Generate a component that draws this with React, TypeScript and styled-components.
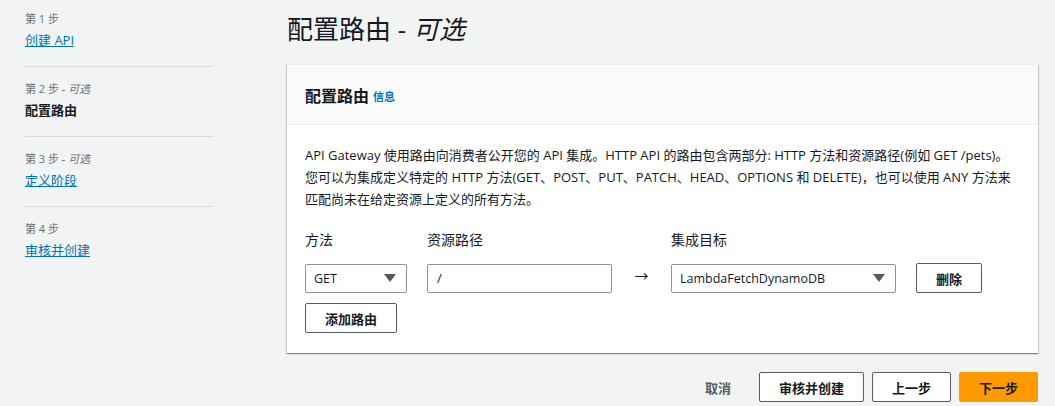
import styled, { createGlobalStyle } from 'styled-components'

const GlobalStyle = createGlobalStyle`
  body {
    margin: 0;
    background: #f2f3f3;
    font-family: 'Open Sans', 'Noto Sans CJK SC', sans-serif;
    color: #16191f;
  }
`

const Page = styled.div`
  display: flex;
  width: 1055px;
  height: 406px;
  overflow: hidden;
`

const Nav = styled.nav`
  width: 188px;
  margin-left: 25px;
  padding-top: 11px;
  flex-shrink: 0;
`

const StepItem = styled.div<{ $last?: boolean }>`
  padding-bottom: 16px;
  margin-bottom: 14px;
  border-bottom: ${(p) => (p.$last ? 'none' : '1px solid #d5dbdb')};
`

const StepLabel = styled.div`
  font-size: 11px;
  line-height: 16px;
  color: #687078;
  margin-bottom: 3px;

  em {
    font-style: italic;
  }
`

const StepLink = styled.a`
  display: block;
  width: fit-content;
  font-size: 13px;
  line-height: 20px;
  color: #0073bb;
  text-decoration: underline;
`

const StepCurrent = styled.div`
  font-size: 13px;
  line-height: 20px;
  font-weight: 700;
  color: #16191f;
`

const Main = styled.main`
  margin-left: 74px;
  width: 751px;
  padding-top: 10px;
  display: flex;
  flex-direction: column;
`

const Title = styled.h1`
  margin: 0 0 16px;
  font-size: 26px;
  line-height: 38px;
  font-weight: 400;

  em {
    font-style: italic;
  }
`

const Card = styled.section`
  background: #fff;
  border-top: 1px solid #eaeded;
  box-shadow: 0 1px 1px 0 rgba(0, 28, 36, 0.3), 1px 1px 1px 0 rgba(0, 28, 36, 0.15),
    -1px 1px 1px 0 rgba(0, 28, 36, 0.15);
`

const CardHeader = styled.header`
  background: #fafafa;
  border-bottom: 1px solid #eaeded;
  padding: 0 18px;
  height: 59px;
  display: flex;
  align-items: center;
  gap: 4px;
`

const CardTitle = styled.h2`
  margin: 0;
  font-size: 16px;
  font-weight: 700;
`

const InfoLink = styled.a`
  font-size: 11px;
  font-weight: 700;
  color: #0073bb;
  margin-top: 3px;
`

const CardBody = styled.div`
  padding: 19px 18px 20px;
`

const Description = styled.p`
  margin: 0 0 20px;
  font-size: 13px;
  line-height: 22px;
`

const RouteGrid = styled.div`
  display: grid;
  grid-template-columns: 102px 185px 19px 225px 66px;
  column-gap: 20px;
  row-gap: 10px;
  align-items: center;
`

const FieldLabel = styled.div`
  font-size: 14px;
  line-height: 20px;
  margin-bottom: 3px;
`

const SelectBox = styled.div`
  height: 29px;
  box-sizing: border-box;
  border: 1px solid #879596;
  border-radius: 2px;
  padding: 0 10px 0 8px;
  display: flex;
  align-items: center;
  justify-content: space-between;
  font-size: 12.5px;
  color: #16191f;
`

const Caret = styled.span`
  width: 0;
  height: 0;
  border-left: 6px solid transparent;
  border-right: 6px solid transparent;
  border-top: 8px solid #545b64;
`

const TextInput = styled.div`
  height: 29px;
  box-sizing: border-box;
  border: 1px solid #879596;
  border-radius: 2px;
  padding: 0 9px;
  display: flex;
  align-items: center;
  font-size: 13px;
`

const Arrow = styled.div`
  font-size: 14px;
  text-align: center;
  margin-top: -6px;
`

const Button = styled.button<{ $primary?: boolean }>`
  height: 30px;
  box-sizing: border-box;
  padding: 0 19px;
  border-radius: 2px;
  border: 1px solid ${(p) => (p.$primary ? '#ff9900' : '#545b64')};
  background: ${(p) => (p.$primary ? '#ff9900' : '#fff')};
  color: #16191f;
  font-family: inherit;
  font-size: 13px;
  font-weight: 700;
  cursor: pointer;
  white-space: nowrap;
`

const Footer = styled.div`
  display: flex;
  justify-content: flex-end;
  align-items: center;
  gap: 8px;
  margin-top: 19px;
`

const TextButton = styled.button`
  background: none;
  border: none;
  font-family: inherit;
  font-size: 13px;
  font-weight: 700;
  color: #545b64;
  padding: 0 20px 0 0;
`

const steps = [
  { label: '第 1 步', optional: false, name: '创建 API', current: false },
  { label: '第 2 步', optional: true, name: '配置路由', current: true },
  { label: '第 3 步', optional: true, name: '定义阶段', current: false },
  { label: '第 4 步', optional: false, name: '审核并创建', current: false },
]

function App() {
  return (
    <Page>
      <GlobalStyle />
      <Nav>
        {steps.map((s, i) => (
          <StepItem key={s.label} $last={i === steps.length - 1}>
            <StepLabel>
              {s.label}
              {s.optional && <em> - 可选</em>}
            </StepLabel>
            {s.current ? <StepCurrent>{s.name}</StepCurrent> : <StepLink>{s.name}</StepLink>}
          </StepItem>
        ))}
      </Nav>
      <Main>
        <Title>
          配置路由 - <em>可选</em>
        </Title>
        <Card>
          <CardHeader>
            <CardTitle>配置路由</CardTitle>
            <InfoLink>信息</InfoLink>
          </CardHeader>
          <CardBody>
            <Description>
              API Gateway 使用路由向消费者公开您的 API 集成。HTTP API 的路由包含两部分: HTTP
              方法和资源路径(例如 GET /pets)。
              <br />
              您可以为集成定义特定的 HTTP 方法(GET、POST、PUT、PATCH、HEAD、OPTIONS 和
              DELETE)，也可以使用 ANY 方法来
              <br />
              匹配尚未在给定资源上定义的所有方法。
            </Description>
            <RouteGrid>
              <FieldLabel>方法</FieldLabel>
              <FieldLabel>资源路径</FieldLabel>
              <div />
              <FieldLabel>集成目标</FieldLabel>
              <div />
              <SelectBox>
                GET <Caret />
              </SelectBox>
              <TextInput>/</TextInput>
              <Arrow>→</Arrow>
              <SelectBox>
                LambdaFetchDynamoDB <Caret />
              </SelectBox>
              <Button>删除</Button>
              <div>
                <Button>添加路由</Button>
              </div>
            </RouteGrid>
          </CardBody>
        </Card>
        <Footer>
          <TextButton>取消</TextButton>
          <Button>审核并创建</Button>
          <Button>上一步</Button>
          <Button $primary>下一步</Button>
        </Footer>
      </Main>
    </Page>
  )
}

export default App
